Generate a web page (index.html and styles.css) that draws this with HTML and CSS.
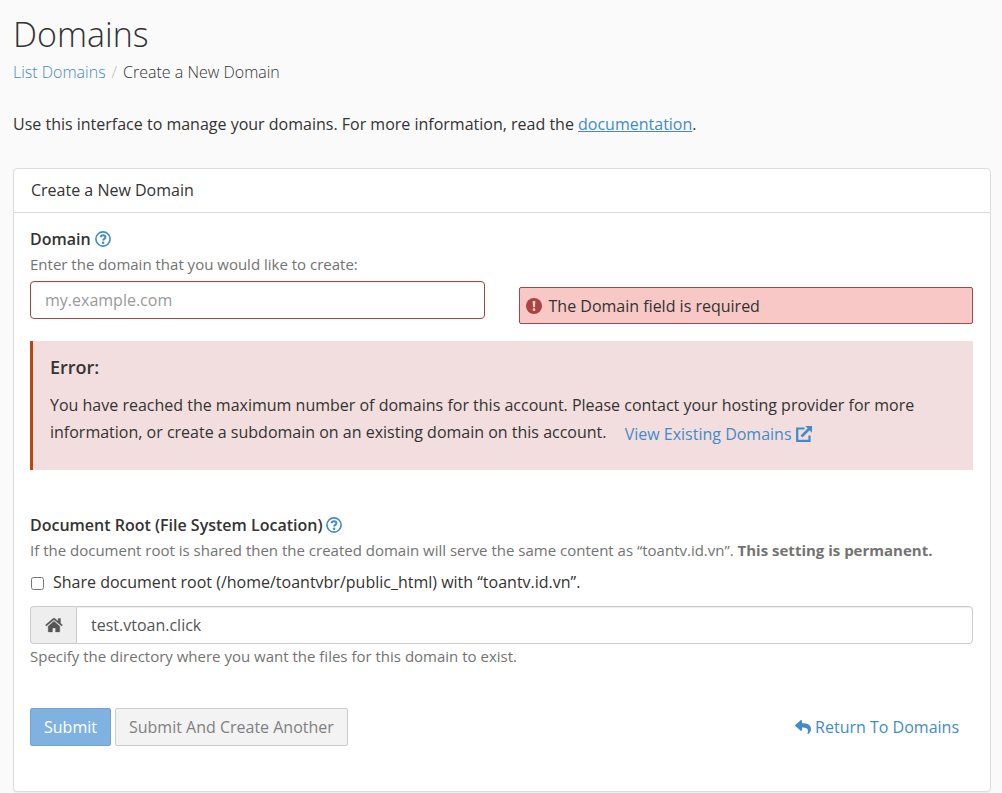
FILE: index.html
```html
<!DOCTYPE html>
<html lang="en">
<head>
<meta charset="utf-8">
<meta name="viewport" content="width=device-width, initial-scale=1">
<title>Domains</title>
<link rel="stylesheet" href="styles.css">
</head>
<body>
<main class="page">
  <h1 class="page-title">Domains</h1>
  <nav class="breadcrumb" aria-label="Breadcrumb">
    <a href="#list">List Domains</a>
    <span class="separator">/</span>
    <span>Create a New Domain</span>
  </nav>
  <p class="intro">Use this interface to manage your domains. For more information, read the <a href="#docs">documentation</a>.</p>

  <section class="panel">
    <h2 class="panel-heading">Create a New Domain</h2>
    <form class="panel-body">
      <div class="field">
        <div class="label-row">
          <label for="domain">Domain</label>
          <button type="button" class="help-button" aria-label="Domain help">
            <svg class="icon" viewBox="0 0 16 16"><circle cx="8" cy="8" r="7.1" fill="none" stroke="currentColor" stroke-width="1.6"/><path d="M5.700 6.300C5.800 4.800 6.800 4.200 8 4.200c1.400 0 2.400.8 2.400 2 0 1.700-2.200 1.700-2.200 3.300" fill="none" stroke="currentColor" stroke-width="2"/><circle cx="8.100" cy="11.700" r="1.200" fill="currentColor"/></svg>
          </button>
        </div>
        <p class="hint" id="domain-hint">Enter the domain that you would like to create:</p>
        <div class="domain-row">
          <input class="text-input invalid" id="domain" type="text" placeholder="my.example.com" aria-describedby="domain-hint domain-error">
          <div class="validation" id="domain-error">
            <svg class="icon" viewBox="0 0 16 16"><circle cx="8" cy="8" r="8" fill="currentColor"/><path d="M6.600 3h2.800L9 9.200H7z" fill="#f7c8c5"/><circle cx="8" cy="11.700" r="1.400" fill="#f7c8c5"/></svg>
            <span>The Domain field is required</span>
          </div>
        </div>
      </div>

      <div class="callout" role="alert">
        <h3 class="callout-title">Error:</h3>
        <p class="callout-text">You have reached the maximum number of domains for this account. Please contact your hosting provider for more information, or create a subdomain on an existing domain on this account. <a class="callout-link" href="#existing">View Existing Domains <svg class="icon" viewBox="0 0 16 16"><path d="M8.500 2.500H1.200v12.300h12.300V9.500" fill="none" stroke="currentColor" stroke-width="2.200"/><path d="M5.500 10.500L13 3" fill="none" stroke="currentColor" stroke-width="2.600"/><path d="M9.300 0H16v6.700z" fill="currentColor"/></svg></a></p>
      </div>

      <div class="field">
        <div class="label-row">
          <label for="root">Document Root (File System Location)</label>
          <button type="button" class="help-button" aria-label="Document root help">
            <svg class="icon" viewBox="0 0 16 16"><circle cx="8" cy="8" r="7.100" fill="none" stroke="currentColor" stroke-width="1.600"/><path d="M5.700 6.300C5.800 4.800 6.800 4.200 8 4.200c1.400 0 2.400.8 2.400 2 0 1.700-2.200 1.700-2.200 3.300" fill="none" stroke="currentColor" stroke-width="2"/><circle cx="8.100" cy="11.700" r="1.200" fill="currentColor"/></svg>
          </button>
        </div>
        <p class="hint">If the document root is shared then the created domain will serve the same content as “toantv.id.vn”. <strong>This setting is permanent.</strong></p>
        <div class="check-row">
          <input id="share" type="checkbox">
          <label for="share">Share document root (/home/toantvbr/public_html) with “toantv.id.vn”.</label>
        </div>
        <div class="input-group">
          <span class="addon">
            <svg class="home-icon" viewBox="0 0 18 16"><path d="M9 4.300L3.200 9.200V14.500c0 .3.200.5.500.5h3.800v-4h3v4h3.800c.3 0 .5-.2.500-.5V9.200zM17.600 8L15.500 6.200V1.500h-2.400v2.700L10.200 1.700c-.7-.6-1.700-.6-2.400 0L.4 8l1 1.100L9 2.800l7.600 6.300z" fill="currentColor" stroke="currentColor" stroke-width=".3"/></svg>
          </span>
          <input class="text-input" id="root" type="text" value="test.vtoan.click" aria-describedby="root-hint">
        </div>
        <p class="hint" id="root-hint">Specify the directory where you want the files for this domain to exist.</p>
      </div>

      <div class="actions">
        <button type="submit" class="button primary" disabled>Submit</button>
        <button type="button" class="button secondary" disabled>Submit And Create Another</button>
        <a class="return-link" href="#list"><svg class="icon" viewBox="0 0 512 512"><path d="M8.300 189.800L184.300 37.900C199.700 24.600 224 35.300 224 56v80c160.600 1.800 288 34 288 186.300 0 61.400-39.600 122.300-83.300 154.100-13.700 9.900-33.100-2.500-28.100-18.600C445.900 312.900 379.100 274.300 224 272v88c0 20.700-24.300 31.500-39.700 18.200l-176-152c-11.100-9.600-11.100-26.800 0-36.400z" fill="currentColor"/></svg><span>Return To Domains</span></a>
      </div>
    </form>
  </section>
</main>
</body>
</html>
```
FILE: styles.css
```css
* {
  box-sizing: border-box;
}

body {
  margin: 0;
  background: #fafafa;
  color: #333;
  font: 16px/24px "Open Sans", "Noto Sans", sans-serif;
}

h1, h2, h3, p {
  margin: 0;
  font-weight: 400;
}

a {
  color: #428bca;
  text-decoration: none;
}

input, button {
  font: inherit;
}

.icon {
  width: 16px;
  height: 16px;
  flex: none;
}

.page {
  padding: 14px 11px 1px 13px;
}

.page-title {
  font-size: 34px;
  line-height: 40px;
  font-weight: 300;
}

.breadcrumb {
  display: flex;
  gap: 6px;
  margin-top: 6px;
  font-weight: 300;
}

.separator {
  color: #bbb;
}

.intro {
  margin: 28px 0 32px;
}

.intro a {
  text-decoration: underline;
}

.panel {
  background: #fff;
  border: 1px solid #ddd;
  border-radius: 4px;
  box-shadow: 0 1px 1px rgba(0, 0, 0, 0.05);
}

.panel-heading {
  padding: 9px 17px 10px;
  border-bottom: 1px solid #ddd;
  font-size: 16px;
  line-height: 24px;
}

.panel-body {
  padding: 14px 17px 45px 16px;
}

.label-row {
  display: flex;
  align-items: center;
  gap: 4px;
  margin-bottom: 1px;
  font-weight: 600;
}

.help-button {
  display: flex;
  padding: 0;
  border: 0;
  background: none;
  color: #428bca;
}

.hint {
  color: #737373;
  font-size: 15px;
  line-height: 24px;
}

.domain-row {
  display: grid;
  grid-template-columns: 1fr 1fr;
  align-items: start;
  gap: 34px;
  margin-top: 5px;
}

.text-input {
  width: 100%;
  height: 38px;
  padding: 6px 14px;
  border: 1px solid #ccc;
  border-radius: 4px;
  background: #fff;
  color: #555;
  box-shadow: inset 0 1px 1px rgba(0, 0, 0, 0.08);
}

.text-input::placeholder {
  color: #999;
}

.invalid {
  border-color: #a94442;
}

.validation {
  display: flex;
  align-items: center;
  gap: 7px;
  margin-top: 6px;
  padding: 6px 6px 5px;
  border: 1px solid #984c4c;
  border-radius: 2px;
  background: #f7c8c5;
}

.validation .icon {
  color: #a94442;
}

.callout {
  margin: 17px 0 43px;
  padding: 13px 17px 24px;
  border-left: 3px solid #bd4511;
  background: #f2dede;
}

.callout-title {
  margin-bottom: 12px;
  font-size: 18px;
  line-height: 26px;
  font-weight: 600;
}

.callout-text {
  line-height: 27px;
}

.callout-link {
  display: inline-block;
  margin-left: 14px;
  line-height: 20px;
  vertical-align: -2px;
}

.callout-link .icon {
  vertical-align: -2px;
}

.check-row {
  display: flex;
  align-items: center;
  gap: 9px;
  margin: 8px 0 12px;
}

.check-row input {
  width: 13px;
  height: 13px;
  margin: 2px 0 0 1px;
}

.input-group {
  display: flex;
}

.addon {
  display: flex;
  align-items: center;
  justify-content: center;
  flex: none;
  width: 46px;
  border: 1px solid #ccc;
  border-right: 0;
  border-radius: 4px 0 0 4px;
  background: #eee;
  color: #555;
}

.home-icon {
  width: 18px;
  height: 16px;
}

.input-group .text-input {
  border-radius: 0 4px 4px 0;
}

.actions {
  display: flex;
  align-items: center;
  gap: 4px;
  margin-top: 40px;
}

.button {
  padding: 6px 13px;
  border: 1px solid #ccc;
  border-radius: 2px;
}

.primary {
  border-color: #76a5cc;
  background: #7fb2e1;
  color: #fff;
}

.secondary {
  background: #f3f3f3;
  color: #808080;
}

.return-link {
  display: flex;
  align-items: center;
  gap: 4px;
  margin: 0 14px 0 auto;
}
```
